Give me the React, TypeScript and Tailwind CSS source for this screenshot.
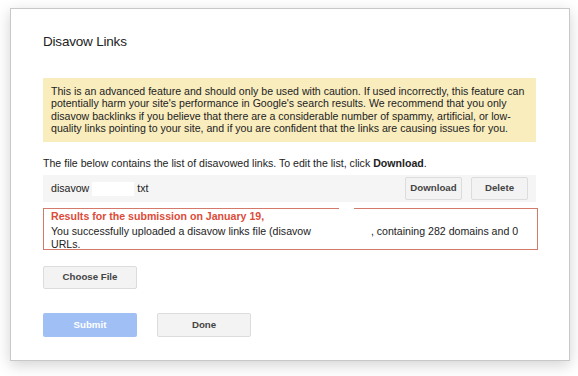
export default function App() {
  return (
    <div
      className="min-h-[376px] w-[578px] bg-white pt-[8px] pl-[10px]"
      style={{ fontFamily: '"Liberation Sans", Arial, sans-serif' }}
    >
      <div className="h-[353px] w-[560px] border border-[#c8c8c8] bg-white px-[32px] pt-[23px] shadow-[0_4px_14px_rgba(0,0,0,0.18)]">
        <h1 className="text-[13.5px] leading-[20px] tracking-[-0.2px] text-[#222]">Disavow Links</h1>

        {/* Warning */}
        <div className="mt-[26px] h-[64px] w-[493px] bg-[#f9edbe] px-[8px] pt-[7px] text-[10.6px] leading-[12.3px] text-[#222]">
          This is an advanced feature and should only be used with caution. If used incorrectly, this feature can
          potentially harm your site's performance in Google's search results. We recommend that you only
          disavow backlinks if you believe that there are a considerable number of spammy, artificial, or low-quality
          links pointing to your site, and if you are confident that the links are causing issues for you.
        </div>

        <p className="mt-[14px] text-[10.6px] leading-[14px] text-[#222]">
          The file below contains the list of disavowed links. To edit the list, click <b>Download</b>.
        </p>

        {/* File row */}
        <div className="mt-[5px] flex h-[27px] w-[493px] items-center bg-[#f5f5f5] px-[8px] text-[10.6px] text-[#222]">
          <span>disavow</span>
          <span className="mx-[3px] inline-block h-[14px] w-[42px] bg-white" />
          <span>txt</span>
          <div className="ml-auto flex gap-[9px]">
            <button className="h-[23px] w-[57px] rounded-[2px] border border-[#dcdcdc] bg-[#f3f3f3] text-[9.7px] font-bold text-[#444]">
              Download
            </button>
            <button className="h-[23px] w-[57px] rounded-[2px] border border-[#dcdcdc] bg-[#f3f3f3] text-[9.7px] font-bold text-[#444]">
              Delete
            </button>
          </div>
        </div>

        {/* Result */}
        <div className="relative mt-[6px] h-[42px] w-[495px] border border-[#d47a6a] px-[7px] text-[10.6px] text-[#222]">
          <span className="absolute -top-[2px] left-[295px] h-[4px] w-[15px] bg-white" />
          <div className="font-bold leading-[14px] text-[#dd4b39]">Results for the submission on January 19,</div>
          <div className="mt-[2px] leading-[12.5px]">
            <div>
              You successfully uploaded a disavow links file (disavow
              <span className="mx-[2px] inline-block h-[9px] w-[56px] bg-white" />, containing 282 domains and 0
            </div>
            <div>URLs.</div>
          </div>
        </div>

        <button className="mt-[16px] block h-[23px] w-[94px] rounded-[2px] border border-[#dcdcdc] bg-[#f3f3f3] text-[9.7px] font-bold text-[#444]">
          Choose File
        </button>

        <div className="mt-[24px] flex gap-[20px]">
          <button className="h-[24px] w-[94px] rounded-[2px] bg-[#a0c0f5] text-[9.7px] font-bold text-white">
            Submit
          </button>
          <button className="h-[24px] w-[94px] rounded-[2px] border border-[#dcdcdc] bg-[#f3f3f3] text-[9.7px] font-bold text-[#444]">
            Done
          </button>
        </div>
      </div>
    </div>
  );
}
